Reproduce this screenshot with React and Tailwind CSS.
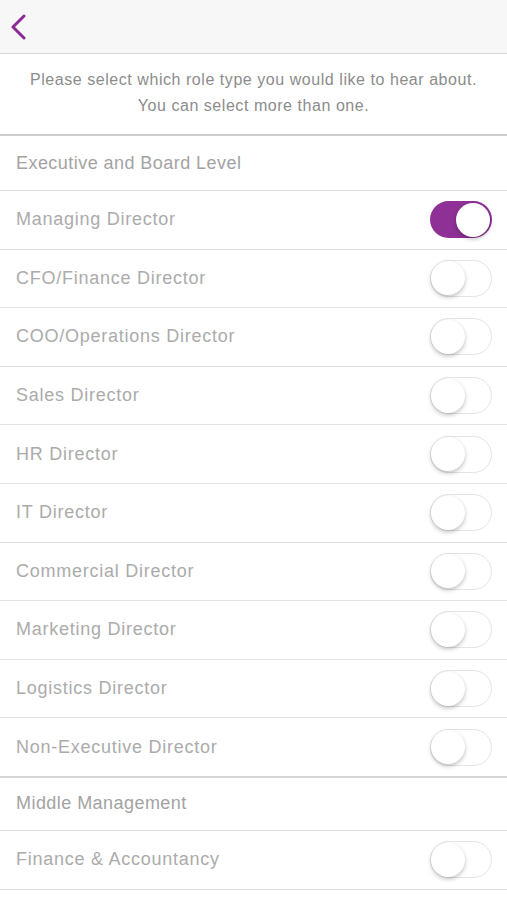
import { useState } from 'react';

const SECTIONS = [
  {
    title: 'Executive and Board Level',
    roles: [
      'Managing Director',
      'CFO/Finance Director',
      'COO/Operations Director',
      'Sales Director',
      'HR Director',
      'IT Director',
      'Commercial Director',
      'Marketing Director',
      'Logistics Director',
      'Non-Executive Director',
    ],
  },
  {
    title: 'Middle Management',
    roles: ['Finance & Accountancy'],
  },
];

function Toggle({ on, onChange }) {
  return (
    <button
      type="button"
      onClick={onChange}
      className={`relative w-[62px] h-[37px] rounded-full transition-colors duration-200 ${
        on ? 'bg-[#8e3096]' : 'bg-white border-[1.5px] border-[#e4e4e4]'
      }`}
    >
      <span
        className={`absolute top-1/2 -translate-y-1/2 w-[34px] h-[34px] rounded-full bg-white shadow-[0_2px_4px_rgba(0,0,0,0.25)] transition-all duration-200 ${
          on ? 'left-[26px]' : 'left-[0px]'
        }`}
      />
    </button>
  );
}

export default function App() {
  const [selected, setSelected] = useState({ 'Managing Director': true });

  const toggle = (role) => setSelected((prev) => ({ ...prev, [role]: !prev[role] }));

  return (
    <div className="h-[900px] overflow-hidden bg-white font-['Liberation_Sans',Arial,sans-serif]">
      <div className="h-[54px] bg-[#f7f7f7] border-b border-[#d6d6d6] flex items-center px-[10px]">
        <svg width="18" height="26" viewBox="0 0 18 26" fill="none">
          <path d="M14 2 L3 13 L14 24" stroke="#8b2c96" strokeWidth="3" strokeLinecap="round" strokeLinejoin="round" />
        </svg>
      </div>

      <div className="h-[82px] flex flex-col items-center justify-center text-[16px] tracking-[0.55px] leading-[26px] text-[#8c8c8c] border-b-2 border-[#cfcfcf] pb-[2px]">
        <p>Please select which role type you would like to hear about.</p>
        <p>You can select more than one.</p>
      </div>

      {SECTIONS.map((section, si) => (
        <div key={section.title}>
          <div
            className={`h-[55px] flex items-center px-4 text-[18px] tracking-[0.45px] text-[#a3a3a3] border-b border-[#e2e2e2] ${
              si > 0 ? 'border-t-2 border-t-[#d4d4d4] -mt-px' : ''
            }`}
          >
            {section.title}
          </div>
          {section.roles.map((role) => (
            <div
              key={role}
              className="h-[58.6px] flex items-center justify-between pl-4 pr-[15px] border-b border-[#e2e2e2]"
            >
              <span className="text-[18px] tracking-[0.75px] text-[#ababab]">{role}</span>
              <Toggle on={!!selected[role]} onChange={() => toggle(role)} />
            </div>
          ))}
        </div>
      ))}
    </div>
  );
}
